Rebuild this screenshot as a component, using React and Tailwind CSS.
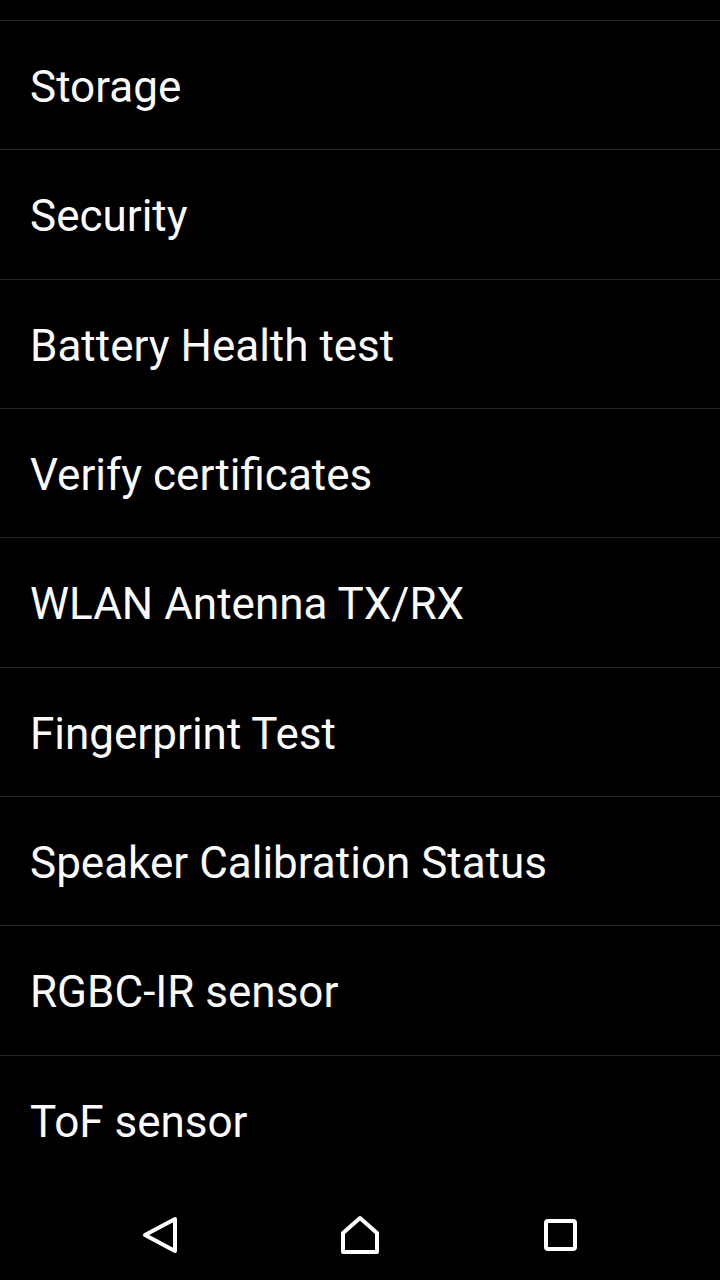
const items = [
  'Storage',
  'Security',
  'Battery Health test',
  'Verify certificates',
  'WLAN Antenna TX/RX',
  'Fingerprint Test',
  'Speaker Calibration Status',
  'RGBC-IR sensor',
  'ToF sensor',
];

const App = () => {
  return (
    <div className="w-[720px] h-[1280px] bg-black flex flex-col overflow-hidden" style={{ fontFamily: 'Roboto, "Noto Sans", sans-serif' }}>
      <div className="h-[20px]" />
      <div className="flex-1 flex flex-col">
        {items.map((label, index) => (
          <div key={index} className="flex-1 flex items-center border-t border-[#262626] pl-[30px] pt-[4px]">
            <span className="text-[#fafafa] text-[44px] leading-none">{label}</span>
          </div>
        ))}
      </div>
      <div className="h-[96px] flex items-center px-[60px] pt-[6px]">
        <div className="flex-1 flex justify-center">
          <svg width="40" height="40" viewBox="0 0 40 40" fill="none" stroke="white" strokeWidth="4" strokeLinejoin="round" strokeLinecap="round">
            <path d="M35 4 L5 20 L35 36 Z" />
          </svg>
        </div>
        <div className="flex-1 flex justify-center">
          <svg width="40" height="40" viewBox="0 0 40 40" fill="none" stroke="white" strokeWidth="4" strokeLinejoin="round" strokeLinecap="round">
            <path d="M3 37 V18 L20 3 L37 18 V37 Z" />
          </svg>
        </div>
        <div className="flex-1 flex justify-center">
          <svg width="40" height="40" viewBox="0 0 40 40" fill="none" stroke="white" strokeWidth="4" strokeLinejoin="round">
            <rect x="6" y="6" width="29" height="28" rx="2" />
          </svg>
        </div>
      </div>
    </div>
  );
};

export default App;
